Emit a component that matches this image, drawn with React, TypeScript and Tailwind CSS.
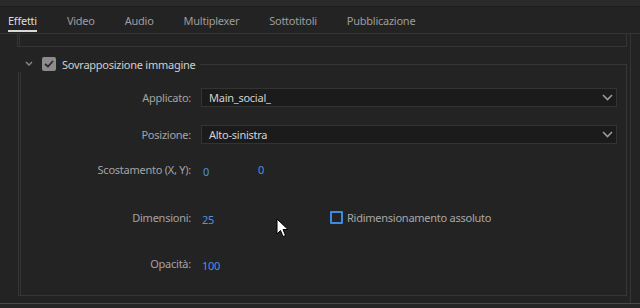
import React from "react";

const font = { fontFamily: '"Noto Sans", "Open Sans", sans-serif' };

function Chevron() {
  return (
    <svg width="11" height="7" viewBox="0 0 11 7" className="shrink-0">
      <path d="M1 1 L5.5 5.5 L10 1" fill="none" stroke="#9a9a9a" strokeWidth="1.6" />
    </svg>
  );
}

function Dropdown({ value }: { value: string }) {
  return (
    <div className="flex-1 h-[19px] flex items-center justify-between bg-[#1b1b1b] border border-[#333333] pl-[7px] pr-[3px]">
      <span className="text-[11px] text-[#d2d2d2] leading-none">{value}</span>
      <Chevron />
    </div>
  );
}

function Label({ children }: { children: React.ReactNode }) {
  return (
    <div className="w-[170px] shrink-0 text-right text-[11px] text-[#a3a3a3] leading-none">{children}</div>
  );
}

function Num({ children }: { children: React.ReactNode }) {
  return <span className="text-[11px] text-[#4a94e0] leading-none">{children}</span>;
}

export default function App() {
  const tabs = ["Video", "Audio", "Multiplexer", "Sottotitoli", "Pubblicazione"];
  return (
    <div className="w-[640px] h-[308px] bg-[#232323] flex flex-col overflow-hidden relative tracking-[-0.25px]" style={font}>
      <div className="h-[7px] bg-[#2a2a2a] border-b border-[#1c1c1c] shrink-0" />
      <div className="h-[27px] shrink-0 flex items-end pl-[8px] gap-[30px] border-b border-[#353535]">
        <div className="h-full flex flex-col justify-center relative">
          <span className="text-[11px] text-[#dcdcdc] leading-none">Effetti</span>
          <div className="absolute left-0 right-0 bottom-[1px] h-[2px] bg-[#d8d8d8]" />
        </div>
        {tabs.map((t) => (
          <div key={t} className="h-full flex items-center">
            <span className="text-[11px] text-[#9d9d9d] leading-none">{t}</span>
          </div>
        ))}
      </div>
      <div className="flex-1 flex min-h-0">
        <div className="w-[627px] flex flex-col">
          <div className="h-[13px] ml-[17px] border-l-[3px] border-double border-r border-b border-[#353535] shrink-0" />
          <div className="ml-[18px] mt-[9px] flex flex-col">
            <div className="h-[16px] flex items-center">
              <div className="pl-[7px] w-[24px] shrink-0">
                <svg width="8" height="6" viewBox="0 0 8 6">
                  <path d="M1 1 L4 4 L7 1" fill="none" stroke="#8a8a8a" strokeWidth="1.4" />
                </svg>
              </div>
              <div className="w-[14px] h-[14px] rounded-[2px] bg-[#8c8c8c] flex items-center justify-center shrink-0">
                <svg width="10" height="8" viewBox="0 0 10 8">
                  <path d="M1 4 L4 6.5 L9 1" fill="none" stroke="#2a2a2a" strokeWidth="1.8" />
                </svg>
              </div>
              <span className="ml-[6px] text-[11px] text-[#cfcfcf] leading-none">Sovrapposizione immagine</span>
              <div className="flex-1 ml-[4px] h-[8px] self-end border-t border-r border-[#353535]" />
            </div>
            <div className="border-l-[3px] border-double border-r border-b border-[#353535] pt-[16px] pb-[22px] pr-[9px] flex flex-col">
              <div className="flex items-center gap-[10px]">
                <Label>Applicato:</Label>
                <Dropdown value="Main_social_" />
              </div>
              <div className="flex items-center gap-[10px] mt-[18px]">
                <Label>Posizione:</Label>
                <Dropdown value="Alto-sinistra" />
              </div>
              <div className="flex items-center gap-[10px] mt-[16px] h-[19px]">
                <Label>Scostamento (X, Y):</Label>
                <div className="flex items-center pl-[2px]">
                  <div className="w-[55px]"><Num>0</Num></div>
                  <Num>0</Num>
                </div>
              </div>
              <div className="flex items-center gap-[10px] mt-[29px] h-[19px]">
                <Label>Dimensioni:</Label>
                <div className="flex items-center pl-[1px]">
                  <div className="w-[128px]"><Num>25</Num></div>
                  <div className="w-[13px] h-[13px] border-2 border-[#3d8ae0] rounded-[1px]" />
                  <span className="ml-[4px] text-[11px] text-[#a8a8a8] leading-none">Ridimensionamento assoluto</span>
                </div>
              </div>
              <div className="flex items-center gap-[10px] mt-[27px] h-[19px]">
                <Label>Opacità:</Label>
                <div className="pl-[1px]"><Num>100</Num></div>
              </div>
            </div>
          </div>
        </div>
        <div className="flex-1 flex">
          <div className="ml-[3px] w-[1px] bg-[#353535]" />
        </div>
      </div>
      <div className="h-[5px] shrink-0 border-t border-[#4a4a4a] bg-[#262626]" />
      <svg className="absolute left-[276px] top-[218px]" width="14" height="20" viewBox="0 0 14 20">
        <path d="M1 1 L1 16 L4.5 12.5 L7 18.5 L9.5 17.5 L7 11.5 L12 11.5 Z" fill="#ffffff" stroke="#000000" strokeWidth="1" />
      </svg>
    </div>
  );
}
